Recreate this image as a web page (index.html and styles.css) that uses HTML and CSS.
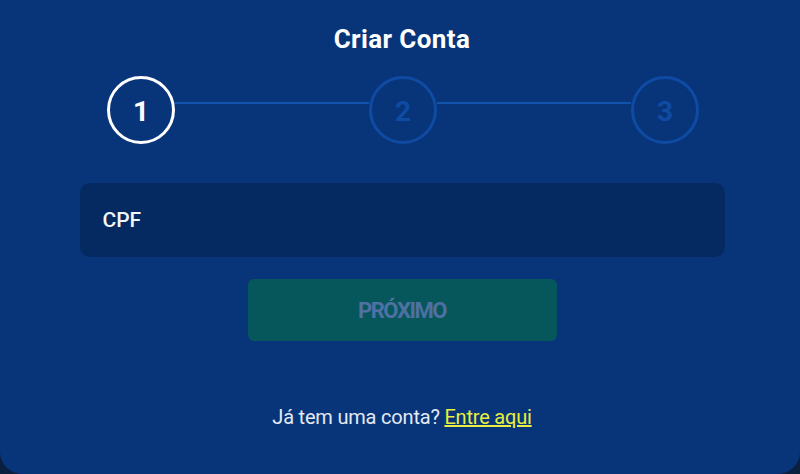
FILE: index.html
```html
<!DOCTYPE html>
<html lang="pt-BR">
<head>
    <meta charset="UTF-8">
    <meta name="viewport" content="width=device-width, initial-scale=1.0">
    <title>Criar Conta</title>
    <link rel="stylesheet" href="styles.css">
</head>
<body>
    <div class="modal">
        <h1 class="title">Criar Conta</h1>
        <div class="stepper">
            <div class="step active">1</div>
            <div class="step-line"></div>
            <div class="step">2</div>
            <div class="step-line"></div>
            <div class="step">3</div>
        </div>
        <form class="form" onsubmit="return false">
            <input class="field" type="text" placeholder="CPF">
            <button class="next-button" type="submit" disabled>PRÓXIMO</button>
        </form>
        <p class="login">Já tem uma conta? <a href="#">Entre aqui</a></p>
    </div>
</body>
</html>
```

FILE: styles.css
```css
body {
    margin: 0;
    background-color: #0b1f3f;
    font-family: Roboto, "Noto Sans", sans-serif;
    height: 474px;
    overflow: hidden;
}
.modal {
    height: 474px;
    box-sizing: border-box;
    background-color: #08357a;
    border-radius: 0 0 22px 22px;
    padding-top: 23px;
    display: flex;
    flex-direction: column;
    align-items: center;
}
.title {
    margin: 0;
    color: #ffffff;
    font-size: 26px;
    font-weight: 700;
    line-height: 32px;
    letter-spacing: 0.4px;
    transform: translateX(2px);
}
.stepper {
    margin-top: 21px;
    width: 592px;
    display: flex;
    align-items: flex-start;
    transform: translateX(3px);
}
.step {
    width: 68px;
    height: 68px;
    box-sizing: border-box;
    border: 3px solid #0f4ba3;
    border-radius: 50%;
    display: flex;
    justify-content: center;
    align-items: center;
    padding-top: 3px;
    color: #0f4ba3;
    font-size: 28px;
    font-weight: 700;
    flex-shrink: 0;
}
.step.active {
    border-color: #ffffff;
    color: #ffffff;
}
.step-line {
    flex: 1;
    height: 2px;
    margin-top: 26px;
    background-color: #1253ae;
}
.form {
    margin-top: 39px;
    display: flex;
    flex-direction: column;
    align-items: center;
    transform: translateX(2px);
}
.field {
    width: 645px;
    height: 74px;
    box-sizing: border-box;
    border: none;
    border-radius: 10px;
    background-color: #052a61;
    padding: 0 23px;
    font-family: inherit;
    font-size: 21px;
    font-weight: 500;
    color: #ffffff;
    outline: none;
}
.field::placeholder {
    color: #f2f5fa;
    opacity: 1;
}
.next-button {
    margin-top: 22px;
    width: 309px;
    height: 62px;
    border: none;
    border-radius: 6px;
    background-color: #05575b;
    color: #4f70a2;
    font-family: inherit;
    font-size: 22px;
    font-weight: 700;
    letter-spacing: -1.4px;
}
.login {
    margin: 64px 0 0;
    color: #e3e9f2;
    font-size: 20px;
    letter-spacing: -0.2px;
    transform: translateX(2px);
}
.login a {
    color: #e9ef3c;
    text-decoration: underline;
}
```
